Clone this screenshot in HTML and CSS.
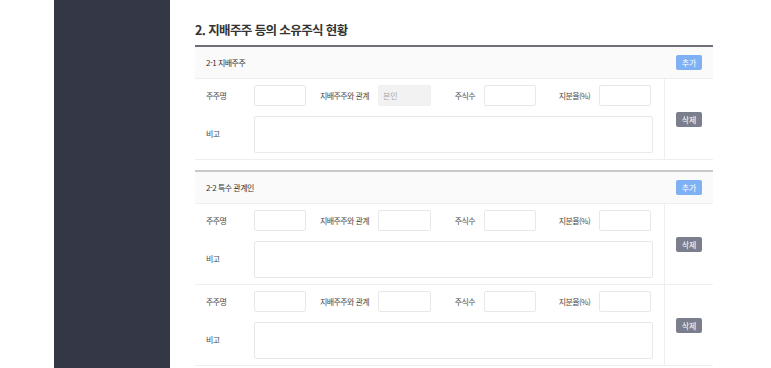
FILE: index.html
```html
<!DOCTYPE html>
<html lang="ko">
<head>
    <meta charset="UTF-8">
    <meta name="viewport" content="width=device-width, initial-scale=1.0">
    <title>지배주주 등의 소유주식 현황</title>
    <link rel="stylesheet" href="styles.css">
</head>
<body>
    <div class="page">
        <div class="gutter"></div>
        <aside class="sidebar"></aside>
        <main class="content">
            <h2 class="title">2. 지배주주 등의 소유주식 현황</h2>

            <!-- 2-1 지배주주 -->
            <section class="section first">
                <div class="section-head">
                    <span>2-1 지배주주</span>
                    <button class="btn btn-add">추가</button>
                </div>
                <div class="item">
                    <div class="item-body">
                        <div class="fields">
                            <label class="lbl lbl-first">주주명</label>
                            <input class="inp w52" type="text">
                            <label class="lbl w72">지배주주와 관계</label>
                            <input class="inp w53 disabled" type="text" value="본인" disabled>
                            <label class="lbl w53">주식수</label>
                            <input class="inp w52" type="text">
                            <label class="lbl w63">지분율(%)</label>
                            <input class="inp w52" type="text">
                        </div>
                        <div class="memo">
                            <label class="lbl lbl-first">비고</label>
                            <textarea class="inp area"></textarea>
                        </div>
                    </div>
                    <div class="item-side">
                        <button class="btn btn-del">삭제</button>
                    </div>
                </div>
            </section>

            <!-- 2-2 특수 관계인 -->
            <section class="section">
                <div class="section-head">
                    <span>2-2 특수 관계인</span>
                    <button class="btn btn-add">추가</button>
                </div>
                <div class="item">
                    <div class="item-body">
                        <div class="fields">
                            <label class="lbl lbl-first">주주명</label>
                            <input class="inp w52" type="text">
                            <label class="lbl w72">지배주주와 관계</label>
                            <input class="inp w53" type="text">
                            <label class="lbl w53">주식수</label>
                            <input class="inp w52" type="text">
                            <label class="lbl w63">지분율(%)</label>
                            <input class="inp w52" type="text">
                        </div>
                        <div class="memo">
                            <label class="lbl lbl-first">비고</label>
                            <textarea class="inp area"></textarea>
                        </div>
                    </div>
                    <div class="item-side">
                        <button class="btn btn-del">삭제</button>
                    </div>
                </div>
                <div class="item">
                    <div class="item-body">
                        <div class="fields">
                            <label class="lbl lbl-first">주주명</label>
                            <input class="inp w52" type="text">
                            <label class="lbl w72">지배주주와 관계</label>
                            <input class="inp w53" type="text">
                            <label class="lbl w53">주식수</label>
                            <input class="inp w52" type="text">
                            <label class="lbl w63">지분율(%)</label>
                            <input class="inp w52" type="text">
                        </div>
                        <div class="memo">
                            <label class="lbl lbl-first">비고</label>
                            <textarea class="inp area"></textarea>
                        </div>
                    </div>
                    <div class="item-side">
                        <button class="btn btn-del">삭제</button>
                    </div>
                </div>
            </section>
        </main>
    </div>
</body>
</html>
```

FILE: styles.css
```css
body {
    font-family: "Noto Sans CJK KR", "Noto Sans", sans-serif;
    background-color: #fff;
    color: #444;
    margin: 0;
    padding: 0;
}

.page {
    display: flex;
    min-height: 368px;
}

.gutter {
    width: 54px;
}

.sidebar {
    width: 116px;
    background-color: #343846;
}

.content {
    width: 518px;
    padding-left: 25px;
}

.title {
    margin: 0 0 5px;
    padding-top: 20px;
    font-size: 12.5px;
    line-height: 20px;
    font-weight: 700;
    color: #333;
    letter-spacing: -0.6px;
}

.section {
    border-top: 2px solid #c9c9c9;
    margin-top: 10px;
}

.section.first {
    border-top-color: #6e7079;
    margin-top: 0;
}

.section-head {
    display: flex;
    justify-content: space-between;
    align-items: center;
    height: 31px;
    padding: 0 11px;
    background-color: #fafafa;
    border-bottom: 1px solid #eee;
    font-size: 8px;
    letter-spacing: -0.5px;
    color: #333;
}

.item {
    display: flex;
    border-bottom: 1px solid #eee;
}

.item-body {
    flex: 1;
    display: flex;
    flex-direction: column;
    gap: 10px;
    padding: 6px 11px;
}

.item-side {
    width: 48px;
    border-left: 1px solid #eee;
    display: flex;
    align-items: center;
    justify-content: center;
}

.fields,
.memo {
    display: flex;
    align-items: center;
}

.lbl {
    font-size: 8px;
    letter-spacing: -0.6px;
    color: #4a4a4a;
    text-align: right;
    padding-right: 9px;
    box-sizing: border-box;
    white-space: nowrap;
}

.lbl-first {
    width: 48px;
    text-align: left;
    padding-right: 0;
}

.memo .lbl-first {
    margin-top: -3px;
}

.w52 { width: 52px; }
.w53 { width: 53px; }
.w63 { width: 63px; }
.w72 { width: 72px; }

.inp {
    height: 21px;
    box-sizing: border-box;
    border: 1px solid #e8e8e8;
    border-radius: 2px;
    background-color: #fff;
    font-family: inherit;
    font-size: 8px;
    color: #444;
    padding: 0 4px;
    margin: 0;
    outline: none;
}

.inp.disabled {
    background-color: #f2f2f2;
    border-color: #f0f0f0;
    color: #aaa;
}

.area {
    flex: 1;
    height: 37px;
    resize: none;
}

.btn {
    width: 26px;
    height: 15px;
    padding: 0;
    border: none;
    border-radius: 2px;
    font-family: inherit;
    font-size: 8px;
    color: #fff;
    line-height: 15px;
}

.btn-add {
    background-color: #7fb0f4;
}

.btn-del {
    background-color: #7b7f8d;
}
```
